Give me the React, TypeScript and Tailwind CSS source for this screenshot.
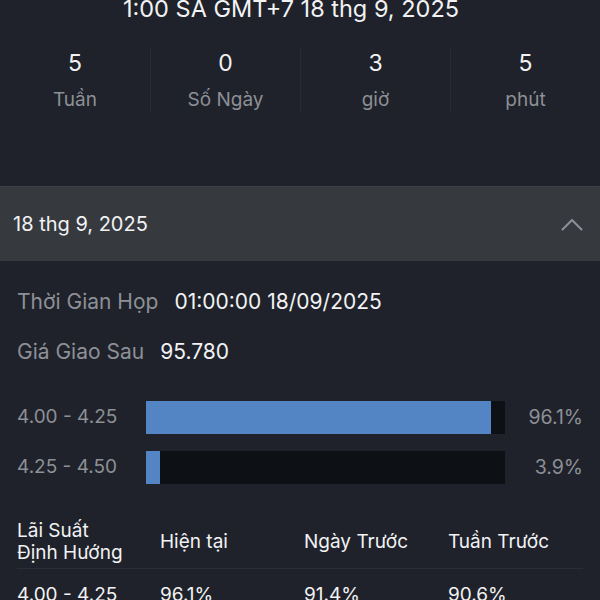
const stats = [
  { value: "5", label: "Tuần" },
  { value: "0", label: "Số Ngày" },
  { value: "3", label: "giờ" },
  { value: "5", label: "phút" },
];

const ranges = [
  { label: "4.00 - 4.25", pct: 96.1 },
  { label: "4.25 - 4.50", pct: 3.9 },
];

function ChevronUp() {
  return (
    <svg width="22" height="13" viewBox="0 0 22 13" fill="none">
      <path d="M1.5 11.5 L11 2 L20.5 11.5" stroke="#8d9096" strokeWidth="2" strokeLinecap="round" strokeLinejoin="round" />
    </svg>
  );
}

export default function App() {
  return (
    <div
      className="h-[600px] w-[600px] overflow-hidden bg-[#1f222a] text-[#f2f2f4]"
      style={{ fontFamily: "Inter, 'Noto Sans', sans-serif" }}
    >
      <div className="pr-[18px] pt-[1px] text-center text-[23.5px] leading-[15px]">1:00 SA GMT+7 18 thg 9, 2025</div>

      <div className="mt-[32px] grid h-[64px] grid-cols-4">
        {stats.map((s, i) => (
          <div
            key={i}
            className={`flex flex-col items-center pt-[1px] ${i > 0 ? "border-l border-[#272b32]" : ""}`}
          >
            <div className="text-[23px] leading-[28px]">{s.value}</div>
            <div className="mt-[11px] text-[19px] leading-[24px] text-[#8d9096]">{s.label}</div>
          </div>
        ))}
      </div>

      <div className="mt-[74px] flex h-[75px] items-center justify-between border-t border-[#3d4147] bg-[#363a3f] pl-[13px] pr-[17px]">
        <span className="text-[20px] leading-[24px]">18 thg 9, 2025</span>
        <ChevronUp />
      </div>

      <div className="px-[17px]">
        <div className="mt-[27px] flex h-[28px] items-center gap-[16px] text-[21px]">
          <span className="text-[#8d9096]">Thời Gian Họp</span>
          <span>01:00:00 18/09/2025</span>
        </div>
        <div className="mt-[22px] flex h-[28px] items-center gap-[16px] text-[21px]">
          <span className="text-[#8d9096]">Giá Giao Sau</span>
          <span>95.780</span>
        </div>

        <div className="mt-[35px] flex flex-col gap-[17px]">
          {ranges.map((r) => (
            <div key={r.label} className="flex h-[33px] items-center text-[19px] text-[#8d9096]">
              <span className="w-[129px]">{r.label}</span>
              <div className="h-full w-[359px] bg-[#0d1015]">
                <div className="h-full bg-[#5385c4]" style={{ width: `${r.pct}%` }} />
              </div>
              <span className="flex-1 text-right text-[19.5px]">{r.pct}%</span>
            </div>
          ))}
        </div>

        <div className="mt-[36px] grid grid-cols-[143px_144px_144px_1fr] items-center border-b border-[#2a2e35] pb-[4px] text-[19px] leading-[22px]">
          <div>
            Lãi Suất
            <br />
            Định Hướng
          </div>
          <div>Hiện tại</div>
          <div>Ngày Trước</div>
          <div>Tuần Trước</div>
        </div>
        <div className="grid grid-cols-[143px_144px_144px_1fr] pt-[14px] text-[19px] leading-[24px]">
          <div>4.00 - 4.25</div>
          <div>96.1%</div>
          <div>91.4%</div>
          <div>90.6%</div>
        </div>
      </div>
    </div>
  );
}
